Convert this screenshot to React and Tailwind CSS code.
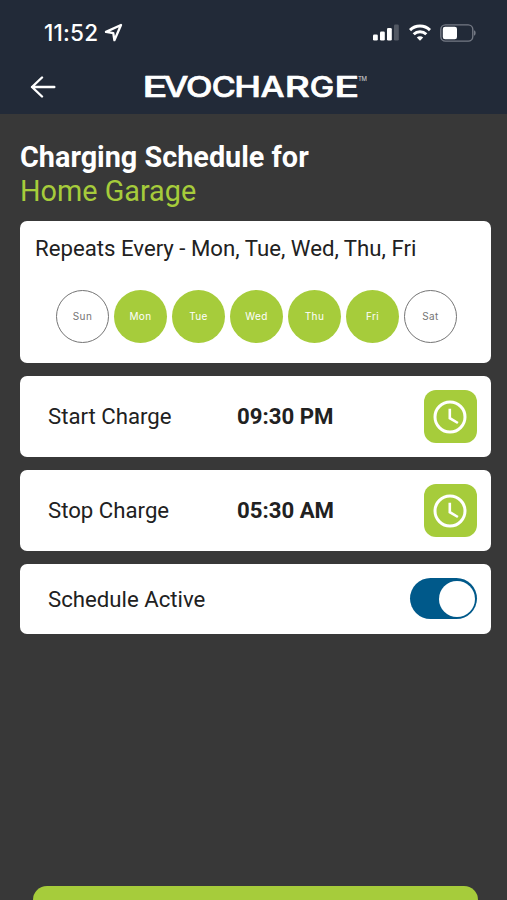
import clsx from "clsx";

const DAYS = [
  { label: "Sun", active: false },
  { label: "Mon", active: true },
  { label: "Tue", active: true },
  { label: "Wed", active: true },
  { label: "Thu", active: true },
  { label: "Fri", active: true },
  { label: "Sat", active: false },
];

const TIMES = [
  { label: "Start Charge", value: "09:30 PM" },
  { label: "Stop Charge", value: "05:30 AM" },
];

// The wordmark is set extra wide, each letter with its own start and advance.
const WORDMARK = [
  { char: "E", x: 0.5, width: 25 },
  { char: "V", x: 21.5, width: 25 },
  { char: "O", x: 44, width: 26.5 },
  { char: "C", x: 69.8, width: 24 },
  { char: "H", x: 92.3, width: 26.7 },
  { char: "A", x: 118.5, width: 24 },
  { char: "R", x: 142.8, width: 25 },
  { char: "G", x: 167.8, width: 24.5 },
  { char: "E", x: 192.2, width: 25 },
];

function StatusBar() {
  return (
    <div className="flex h-[60px] items-center pt-[5px] pr-[31px] pl-[44px]">
      <span className="w-[56px] pt-[2px] font-['Inter',sans-serif] text-[22.5px] leading-none font-medium tracking-[0.2px] whitespace-nowrap">
        11:52
      </span>
      <svg className="ml-[4px] h-[19px] w-[19px]" viewBox="0 0 19 19" fill="none" aria-hidden="true">
        <path d="M17 2 2 8.9l7.3 1.3 1.1 7z" stroke="currentColor" strokeWidth="2.3" strokeLinejoin="round" />
      </svg>
      <svg className="ml-auto h-[17px] w-[26px]" viewBox="0 0 26 17" fill="currentColor" aria-hidden="true">
        <rect x="0" y="10.5" width="4.8" height="6" rx="1.3" />
        <rect x="7" y="7.5" width="4.8" height="9" rx="1.3" />
        <rect x="14" y="4" width="4.8" height="12.5" rx="1.3" />
        <rect x="21" y="0.5" width="4.8" height="16" rx="1.3" opacity="0.22" />
      </svg>
      <svg className="ml-[10px] h-[17px] w-[22px]" viewBox="0 0 22 17" fill="none" stroke="currentColor" strokeWidth="3" aria-hidden="true">
        <path d="M1 6.1a14.3 14.3 0 0 1 20 0" />
        <path d="M4.7 10.3a9 9 0 0 1 12.6 0" />
        <path d="m11 16.8-3.2-3.3a4.6 4.6 0 0 1 6.4 0z" fill="currentColor" stroke="none" />
      </svg>
      <svg className="ml-[9px] h-[18px] w-[36px]" viewBox="0 0 36 18" aria-hidden="true">
        <rect x="0.8" y="0.9" width="32" height="16.2" rx="4.6" fill="none" stroke="#747984" strokeWidth="1.4" />
        <rect x="2.8" y="2.8" width="14.2" height="12.4" rx="2.3" fill="currentColor" />
        <path d="M34 6.3c2.2.8 2.2 4.6 0 5.4z" fill="#747984" />
      </svg>
    </div>
  );
}

function Header() {
  return (
    <header className="h-[114px] bg-[#222a38] text-white">
      <StatusBar />
      <div className="flex h-[54px] items-center pl-[30px]">
        <svg className="h-[22px] w-[26px]" viewBox="0 0 26 22" fill="none" stroke="currentColor" strokeWidth="2.4" strokeLinecap="round" strokeLinejoin="round" aria-label="Back">
          <path d="M24.3 11H2M12 1.5 2 11l10 9.5" />
        </svg>
        <svg className="ml-[86px] h-[44px] w-[228px]" viewBox="0 0 228 44" fill="currentColor" aria-label="EvoCharge">
          <text
            y="31.7"
            fontSize="28.5"
            fontWeight="500"
            stroke="currentColor"
            strokeWidth="0.7"
            strokeLinejoin="round"
            className="font-['Inter',sans-serif]"
          >
            {WORDMARK.map(({ char, x, width }) => (
              <tspan key={x} x={x} textLength={width} lengthAdjust="spacingAndGlyphs">
                {char}
              </tspan>
            ))}
          </text>
          <text x="216" y="15.5" fontSize="6" textLength="9" opacity="0.8" className="font-['Inter',sans-serif]">
            TM
          </text>
        </svg>
      </div>
    </header>
  );
}

function Card({ className, children }) {
  return <section className={clsx("rounded-[7px] bg-white", className)}>{children}</section>;
}

function ClockButton() {
  return (
    <button className="flex size-[53px] items-center justify-center rounded-[12px] bg-[#a6cc3b] pr-px text-white" aria-label="Pick a time">
      <svg className="size-[34px]" viewBox="0 0 34 34" fill="none" stroke="currentColor" strokeWidth="3" aria-hidden="true">
        <circle cx="17" cy="17" r="15" />
        <path d="M16.8 8.8v9.4l8.1 4.8" strokeWidth="2.6" />
      </svg>
    </button>
  );
}

export default function App() {
  return (
    <div className="flex h-[900px] w-full flex-col overflow-hidden bg-[#383838] font-['Roboto',sans-serif] text-[#212121]">
      <Header />
      <main className="flex flex-1 flex-col pt-[26px] pr-[16px] pl-[20px]">
        <h1 className="text-[28.8px] leading-[34px] font-bold text-white">Charging Schedule for</h1>
        <p className="text-[28.8px] leading-[34px] text-[#a6cc3b]">Home Garage</p>

        <div className="mt-[13px] flex flex-col gap-[13px]">
          <Card className="h-[142px] pt-[11px]">
            <p className="pl-[15px] text-[22.2px] leading-[32px]">Repeats Every - Mon, Tue, Wed, Thu, Fri</p>
            <div className="mt-[26px] flex gap-[5px] pl-[36px]">
              {DAYS.map((day) => (
                <span
                  key={day.label}
                  className={clsx(
                    "flex size-[53px] items-center justify-center rounded-full font-['Inter',sans-serif] text-[10px] tracking-[0.4px]",
                    day.active ? "bg-[#a6cc3b] text-white" : "border-[1.5px] border-[#757575] text-[#757575]"
                  )}
                >
                  {day.label}
                </span>
              ))}
            </div>
          </Card>

          {TIMES.map((row) => (
            <Card key={row.label} className="flex h-[81px] items-center pr-[14px] pl-[28px]">
              <span className="w-[189px] pt-px text-[22.2px]">{row.label}</span>
              <span className="flex-1 pt-px text-[22.2px] font-bold">{row.value}</span>
              <ClockButton />
            </Card>
          ))}

          <Card className="flex h-[69.5px] items-center justify-between pr-[14px] pl-[28px]">
            <span className="pt-px text-[22.2px]">Schedule Active</span>
            <span className="flex h-[41px] w-[67px] items-center justify-end rounded-full bg-[#00598a] pr-[2.5px]" role="switch" aria-checked="true">
              <span className="size-[36px] rounded-full bg-white" />
            </span>
          </Card>
        </div>
      </main>
      <div className="mr-[29px] ml-[33px] h-[14px] shrink-0 rounded-t-[16px] bg-[#a6cc3b]" />
    </div>
  );
}
